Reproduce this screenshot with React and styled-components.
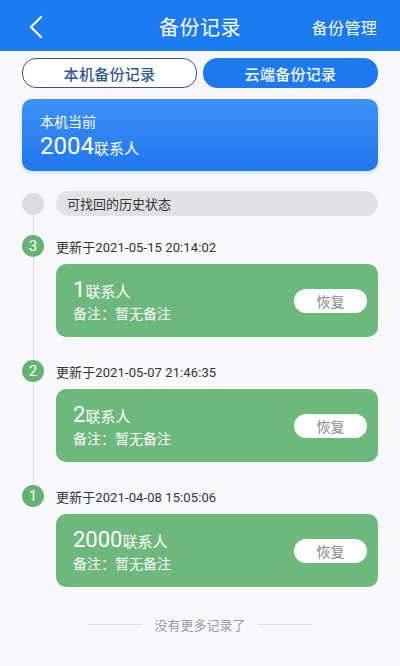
import React from "react";
import styled, { createGlobalStyle } from "styled-components";

const GlobalStyle = createGlobalStyle`
  html, body {
    margin: 0;
    padding: 0;
    background: #f8f8fa;
    font-family: Roboto, "Noto Sans CJK SC", sans-serif;
  }
  * { box-sizing: border-box; }
`;

const Page = styled.div`
  width: 400px;
  min-height: 666px;
  background: #f8f8fa;
`;

const Header = styled.div`
  height: 51px;
  background: #1c7bf0;
  display: grid;
  grid-template-columns: 90px 1fr 90px;
  align-items: center;
  color: #fff;
  padding-top: 2px;
`;

const Back = styled.div`
  padding-left: 27px;
  display: flex;
  align-items: center;
`;

const Title = styled.div`
  text-align: center;
  font-size: 20px;
  letter-spacing: 0.5px;
`;

const Manage = styled.div`
  font-size: 16px;
  text-align: right;
  padding-right: 23px;
  letter-spacing: 0.3px;
`;

const Content = styled.div`
  padding: 7px 22px 0;
`;

const Tabs = styled.div`
  display: grid;
  grid-template-columns: 1fr 1fr;
  gap: 6px;
`;

const Tab = styled.div`
  height: 30px;
  border-radius: 14px;
  display: flex;
  align-items: center;
  justify-content: center;
  font-size: 15px;
  font-weight: 500;
  letter-spacing: 0.3px;
  border: 1px solid ${(p) => (p.active ? "#1e78ee" : "#3e5170")};
  background: ${(p) => (p.active ? "#1e78ee" : "#fff")};
  color: ${(p) => (p.active ? "#fff" : "#2f5a8a")};
`;

const Current = styled.div`
  margin-top: 11px;
  height: 72px;
  border-radius: 10px;
  background: linear-gradient(180deg, #3f90f6 0%, #1f77ef 100%);
  color: #fff;
  padding: 14px 18px 0;
  box-shadow: 0 2px 4px rgba(30, 120, 238, 0.2);
`;

const Label = styled.div`
  font-size: 14px;
  line-height: 18px;
`;

const Count = styled.div`
  display: flex;
  align-items: baseline;
  margin-top: 1px;
`;

const Num = styled.span`
  font-size: ${(p) => p.size || 22}px;
  line-height: 28px;
`;

const Unit = styled.span`
  font-size: 15px;
`;

const Timeline = styled.div`
  position: relative;
  margin-top: 20px;
  display: flex;
  flex-direction: column;
  gap: 19px;
  &::before {
    content: "";
    position: absolute;
    left: 10.5px;
    top: 20px;
    bottom: 96px;
    width: 1px;
    background: #dedede;
  }
`;

const Row = styled.div`
  position: relative;
  display: flex;
  align-items: center;
  gap: 12px;
`;

const Dot = styled.div`
  width: 22px;
  height: 22px;
  border-radius: 50%;
  flex: none;
  background: ${(p) => p.color};
  color: #fff;
  font-size: 15px;
  display: flex;
  align-items: center;
  justify-content: center;
`;

const StatusPill = styled.div`
  flex: 1;
  height: 25px;
  border-radius: 13px;
  background: #e2e2e4;
  font-size: 13px;
  color: #333;
  display: flex;
  align-items: center;
  padding-left: 11px;
`;

const Entry = styled.div`
  display: flex;
  flex-direction: column;
  gap: 7px;
  & + & {
    margin-top: 4px;
  }
`;

const DateText = styled.div`
  font-size: 13px;
  color: #333;
  letter-spacing: 0.1px;
`;

const Card = styled.div`
  margin-left: 34px;
  height: 73px;
  border-radius: 10px;
  background: #6db87c;
  color: #fff;
  display: flex;
  align-items: center;
  justify-content: space-between;
  padding: 0 11px 0 17px;
`;

const Info = styled.div`
  display: flex;
  flex-direction: column;
  padding-bottom: 2px;
`;

const Note = styled.div`
  font-size: 14px;
  line-height: 20px;
`;

const Restore = styled.div`
  width: 73px;
  height: 24px;
  border-radius: 12px;
  background: #fff;
  color: #8a8a8a;
  font-size: 14px;
  display: flex;
  align-items: center;
  justify-content: center;
  margin-top: 1px;
`;

const Footer = styled.div`
  display: flex;
  align-items: center;
  justify-content: center;
  gap: 12px;
  margin-top: 28px;
  font-size: 13px;
  color: #9a9a9a;
  &::before,
  &::after {
    content: "";
    width: 55px;
    height: 1px;
    background: #dcdcdc;
  }
`;

const records = [
  { n: 3, date: "2021-05-15 20:14:02", count: "1" },
  { n: 2, date: "2021-05-07 21:46:35", count: "2" },
  { n: 1, date: "2021-04-08 15:05:06", count: "2000" },
];

export default function App() {
  return (
    <Page>
      <GlobalStyle />
      <Header>
        <Back>
          <svg width="18" height="24" viewBox="0 0 18 24">
            <path d="M14 2 L4 12 L14 22" fill="none" stroke="#fff" strokeWidth="2.2" strokeLinecap="round" strokeLinejoin="round" />
          </svg>
        </Back>
        <Title>备份记录</Title>
        <Manage>备份管理</Manage>
      </Header>
      <Content>
        <Tabs>
          <Tab>本机备份记录</Tab>
          <Tab active>云端备份记录</Tab>
        </Tabs>
        <Current>
          <Label>本机当前</Label>
          <Count>
            <Num size={24}>2004</Num>
            <Unit>联系人</Unit>
          </Count>
        </Current>
        <Timeline>
          <Row>
            <Dot color="#dcdcdc" />
            <StatusPill>可找回的历史状态</StatusPill>
          </Row>
          {records.map((r) => (
            <Entry key={r.n}>
              <Row>
                <Dot color="#66b273">{r.n}</Dot>
                <DateText>更新于{r.date}</DateText>
              </Row>
              <Card>
                <Info>
                  <Count>
                    <Num>{r.count}</Num>
                    <Unit>联系人</Unit>
                  </Count>
                  <Note>备注：暂无备注</Note>
                </Info>
                <Restore>恢复</Restore>
              </Card>
            </Entry>
          ))}
        </Timeline>
        <Footer>没有更多记录了</Footer>
      </Content>
    </Page>
  );
}
